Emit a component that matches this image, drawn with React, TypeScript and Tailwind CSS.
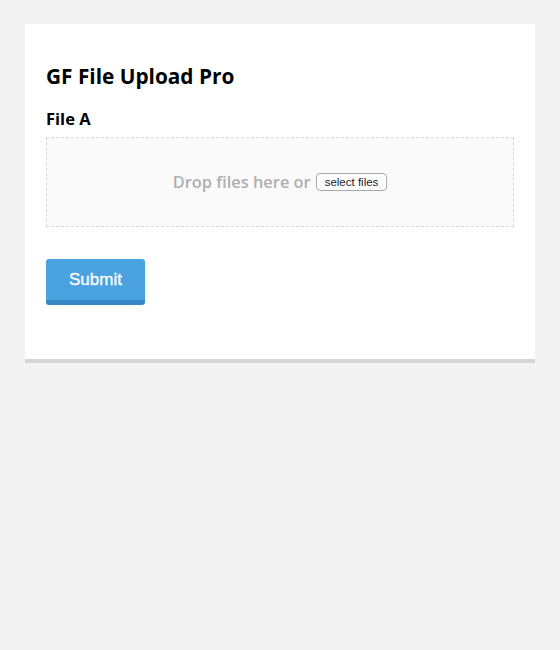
export default function App() {
  return (
    <div className="min-h-[650px] w-full bg-[#f3f3f3] pt-[24px] px-[25px]" style={{ fontFamily: '"Open Sans", sans-serif' }}>
      <div className="bg-white shadow-[0_4px_0_#d6d6d6] px-[21px] pt-[37px] pb-[54px]">
        <h1 className="text-[20.8px] leading-[30px] font-bold text-black">GF File Upload Pro</h1>
        <div className="mt-[17px] text-[16.5px] leading-[22px] font-bold text-black">File A</div>
        <div className="mt-[7px] h-[90px] border border-dashed border-[#d9d9d9] bg-[#fafafa] flex items-center justify-center">
          <span className="text-[16.4px] font-semibold text-[#b0b0b0]">Drop files here or</span>
          <button
            className="ml-[5px] h-[18px] px-[8px] border border-[#aaaaaa] rounded-[4px] bg-white text-[11.5px] leading-[16px] text-[#222]"
            style={{ fontFamily: '"Liberation Sans", Arial, sans-serif' }}
          >
            select files
          </button>
        </div>
        <button
          className="mt-[32px] w-[99px] h-[46px] rounded-[3px] bg-[#4aa3df] border-b-[5px] border-[#3687c4] text-white text-[17px] font-normal"
          style={{ fontFamily: '"Liberation Sans", Arial, sans-serif', WebkitTextStroke: '0.3px white' }}
        >
          Submit
        </button>
      </div>
    </div>
  );
}
